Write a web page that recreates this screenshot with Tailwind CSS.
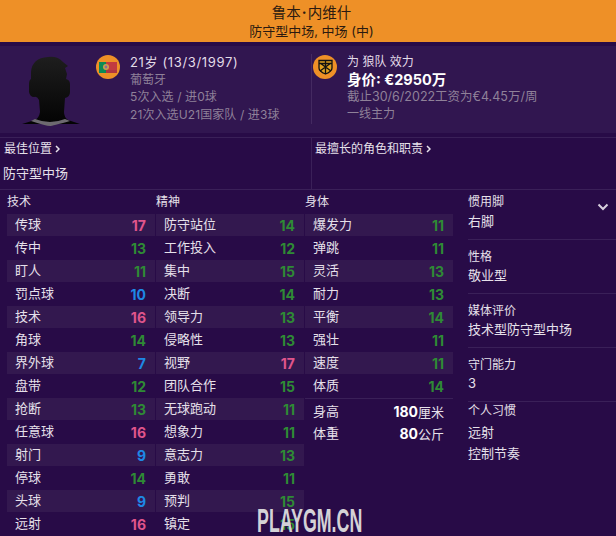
<!doctype html>
<html lang="zh-CN">
<head>
<meta charset="utf-8">
<script src="https://cdn.jsdelivr.net/npm/@tailwindcss/browser@4"></script>
</head>
<body class="m-0">
<div class="relative w-[616px] h-[536px] overflow-hidden bg-[#280b47] text-[#e6e0ea] text-[13px] font-['Inter','Noto_Sans_CJK_SC',sans-serif]">
  <header class="h-[42px] bg-[#ee9027] flex flex-col items-center justify-center text-[#2b1a10] pl-[7px]">
    <div class="text-[14.5px] leading-[19px]">鲁本<span class="mx-[1px] font-bold">·</span>内维什</div>
    <div class="text-[13px] leading-[18px]">防守型中场, 中场 (中)</div>
  </header>

  <section class="mt-[4px] h-[87px] bg-[#311650] flex">
    <div class="w-[311px] flex pl-[10px] pt-[2px]">
      <svg class="w-[80px] h-[85px] shrink-0" viewBox="0 0 80 85">
        <defs><linearGradient id="h" x1="0" y1="0" x2="0" y2="1"><stop offset="0" stop-color="#1e1e1e"/><stop offset="1" stop-color="#030303"/></linearGradient></defs>
        <path d="M12 76 L25 72 Q29 70 30 64 L29 52 Q27 48 24 49 Q20 49 19 44 L19 36 Q19 32 21 31 L21 24 Q22 10 38 9 Q48 8 53 14 L58 18 L55 20 L57 26 L56 31 Q60 32 60 36 L60 44 Q60 49 55 50 L54 64 Q54 69 58 72 L70 76 Z" fill="url(#h)"/>
        <path d="M21 73 L25 71 Q40 77 55 71 L60 73 Q42 78 40 78 Q36 78 21 73 Z" fill="#6d6a70"/>
      </svg>
      <div class="w-[24px] h-[24px] mt-[7px] ml-[6px] rounded-full bg-[#ee9027] flex items-center justify-center shrink-0">
        <svg class="w-[18px] h-[11px]" viewBox="0 0 18 11"><rect width="18" height="11" fill="#c23b40"/><rect width="7" height="11" fill="#0d8a55"/><rect y="8" x="7" width="11" height="3" fill="#b03540"/><circle cx="7" cy="5" r="3" fill="#c9a24a"/><circle cx="7" cy="5" r="1.4" fill="#8a6a9a"/></svg>
      </div>
      <div class="ml-[10px] pt-[5px] whitespace-nowrap">
        <div class="leading-[18px] text-[#e3dce8] tracking-[0.65px]">21岁 (13/3/1997)</div>
        <div class="leading-[17px] text-[12px] text-[#8f8199]">葡萄牙</div>
        <div class="leading-[18px] text-[12px] text-[#8f8199] tracking-[0.1px]">5次入选 / 进0球</div>
        <div class="leading-[17px] text-[12px] text-[#8f8199] tracking-[0.1px]">21次入选U21国家队 / 进3球</div>
      </div>
    </div>
    <div class="flex-1 flex relative pt-[9px] pl-[2px]">
      <div class="absolute left-0 top-[8px] h-[70px] w-px bg-[#442a61]"></div>
      <div class="w-[24px] h-[24px] rounded-full bg-[#ee9027] flex items-center justify-center shrink-0">
        <svg class="w-[15px] h-[16px]" viewBox="0 0 15 16" fill="none" stroke="#111" stroke-width="1.3"><path d="M1 1.5 H14 V9 Q14 12.5 7.5 15 Q1 12.5 1 9 Z" fill="#e0a020"/><path d="M7.5 1.5 V15 M2 4 L13 12 M13 4 L2 12 M1 4.5 H14"/></svg>
      </div>
      <div class="ml-[10px] -mt-[2px] whitespace-nowrap">
        <div class="leading-[18px] text-[12px] text-[#e3dce8]">为 狼队 效力</div>
        <div class="leading-[17px] text-[14.5px] font-bold text-white">身价: €2950万</div>
        <div class="leading-[18px] text-[12.5px] text-[#8f8199]">截止30/6/2022工资为€4.45万/周</div>
        <div class="leading-[16px] text-[12px] text-[#8f8199]">一线主力</div>
      </div>
    </div>
  </section>

  <section class="mt-[4px] h-[53px] border-t border-b border-[#3a2058] flex">
    <div class="w-[311px] pt-[2px]">
      <div class="pl-[4px] leading-[18px] text-[12px] flex items-center gap-[3px]">最佳位置<svg class="w-[5px] h-[8px]" viewBox="0 0 5 8" fill="none" stroke="#e6e0ea" stroke-width="1.5"><path d="M1 1 L4 4 L1 7"/></svg></div>
      <div class="pl-[3px] mt-[6px] leading-[18px] text-[13px]">防守型中场</div>
    </div>
    <div class="flex-1 border-l border-[#3a2058] pl-[3px] pt-[2px] leading-[18px] text-[12px] flex items-start gap-[3px]">最擅长的角色和职责<svg class="w-[5px] h-[8px] mt-[5px]" viewBox="0 0 5 8" fill="none" stroke="#e6e0ea" stroke-width="1.5"><path d="M1 1 L4 4 L1 7"/></svg></div>
  </section>

  <main class="flex pl-[7px]">
    <div class="w-[148px] mr-px">
      <div class="h-[24px] leading-[24px] text-[12px]">技术</div>
      <div class="h-[22px] mb-px bg-[#33184f] flex justify-between items-center pl-[8px] pr-[9px]"><span>传球</span><b class="text-[14px] text-[#e0558c]">17</b></div>
      <div class="h-[22px] mb-px flex justify-between items-center pl-[8px] pr-[9px]"><span>传中</span><b class="text-[14px] text-[#2f8a35]">13</b></div>
      <div class="h-[22px] mb-px bg-[#33184f] flex justify-between items-center pl-[8px] pr-[9px]"><span>盯人</span><b class="text-[14px] text-[#2f8a35]">11</b></div>
      <div class="h-[22px] mb-px flex justify-between items-center pl-[8px] pr-[9px]"><span>罚点球</span><b class="text-[14px] text-[#1e88e5]">10</b></div>
      <div class="h-[22px] mb-px bg-[#33184f] flex justify-between items-center pl-[8px] pr-[9px]"><span>技术</span><b class="text-[14px] text-[#e0558c]">16</b></div>
      <div class="h-[22px] mb-px flex justify-between items-center pl-[8px] pr-[9px]"><span>角球</span><b class="text-[14px] text-[#2f8a35]">14</b></div>
      <div class="h-[22px] mb-px bg-[#33184f] flex justify-between items-center pl-[8px] pr-[9px]"><span>界外球</span><b class="text-[14px] text-[#1e88e5]">7</b></div>
      <div class="h-[22px] mb-px flex justify-between items-center pl-[8px] pr-[9px]"><span>盘带</span><b class="text-[14px] text-[#2f8a35]">12</b></div>
      <div class="h-[22px] mb-px bg-[#33184f] flex justify-between items-center pl-[8px] pr-[9px]"><span>抢断</span><b class="text-[14px] text-[#2f8a35]">13</b></div>
      <div class="h-[22px] mb-px flex justify-between items-center pl-[8px] pr-[9px]"><span>任意球</span><b class="text-[14px] text-[#e0558c]">16</b></div>
      <div class="h-[22px] mb-px bg-[#33184f] flex justify-between items-center pl-[8px] pr-[9px]"><span>射门</span><b class="text-[14px] text-[#1e88e5]">9</b></div>
      <div class="h-[22px] mb-px flex justify-between items-center pl-[8px] pr-[9px]"><span>停球</span><b class="text-[14px] text-[#2f8a35]">14</b></div>
      <div class="h-[22px] mb-px bg-[#33184f] flex justify-between items-center pl-[8px] pr-[9px]"><span>头球</span><b class="text-[14px] text-[#1e88e5]">9</b></div>
      <div class="h-[22px] mb-px flex justify-between items-center pl-[8px] pr-[9px]"><span>远射</span><b class="text-[14px] text-[#e0558c]">16</b></div>
    </div>
    <div class="w-[148px] mr-px">
      <div class="h-[24px] leading-[24px] text-[12px]">精神</div>
      <div class="h-[22px] mb-px bg-[#33184f] flex justify-between items-center pl-[8px] pr-[9px]"><span>防守站位</span><b class="text-[14px] text-[#2f8a35]">14</b></div>
      <div class="h-[22px] mb-px flex justify-between items-center pl-[8px] pr-[9px]"><span>工作投入</span><b class="text-[14px] text-[#2f8a35]">12</b></div>
      <div class="h-[22px] mb-px bg-[#33184f] flex justify-between items-center pl-[8px] pr-[9px]"><span>集中</span><b class="text-[14px] text-[#2f8a35]">15</b></div>
      <div class="h-[22px] mb-px flex justify-between items-center pl-[8px] pr-[9px]"><span>决断</span><b class="text-[14px] text-[#2f8a35]">14</b></div>
      <div class="h-[22px] mb-px bg-[#33184f] flex justify-between items-center pl-[8px] pr-[9px]"><span>领导力</span><b class="text-[14px] text-[#2f8a35]">13</b></div>
      <div class="h-[22px] mb-px flex justify-between items-center pl-[8px] pr-[9px]"><span>侵略性</span><b class="text-[14px] text-[#2f8a35]">13</b></div>
      <div class="h-[22px] mb-px bg-[#33184f] flex justify-between items-center pl-[8px] pr-[9px]"><span>视野</span><b class="text-[14px] text-[#e0558c]">17</b></div>
      <div class="h-[22px] mb-px flex justify-between items-center pl-[8px] pr-[9px]"><span>团队合作</span><b class="text-[14px] text-[#2f8a35]">15</b></div>
      <div class="h-[22px] mb-px bg-[#33184f] flex justify-between items-center pl-[8px] pr-[9px]"><span>无球跑动</span><b class="text-[14px] text-[#2f8a35]">11</b></div>
      <div class="h-[22px] mb-px flex justify-between items-center pl-[8px] pr-[9px]"><span>想象力</span><b class="text-[14px] text-[#2f8a35]">11</b></div>
      <div class="h-[22px] mb-px bg-[#33184f] flex justify-between items-center pl-[8px] pr-[9px]"><span>意志力</span><b class="text-[14px] text-[#2f8a35]">13</b></div>
      <div class="h-[22px] mb-px flex justify-between items-center pl-[8px] pr-[9px]"><span>勇敢</span><b class="text-[14px] text-[#2f8a35]">11</b></div>
      <div class="h-[22px] mb-px bg-[#33184f] flex justify-between items-center pl-[8px] pr-[9px]"><span>预判</span><b class="text-[14px] text-[#2f8a35]">15</b></div>
      <div class="h-[22px] mb-px flex justify-between items-center pl-[8px] pr-[9px]"><span>镇定</span><b class="text-[14px] text-[#2f8a35]">15</b></div>
    </div>
    <div class="w-[148px]">
      <div class="h-[24px] leading-[24px] text-[12px]">身体</div>
      <div class="h-[22px] mb-px bg-[#33184f] flex justify-between items-center pl-[8px] pr-[9px]"><span>爆发力</span><b class="text-[14px] text-[#2f8a35]">11</b></div>
      <div class="h-[22px] mb-px flex justify-between items-center pl-[8px] pr-[9px]"><span>弹跳</span><b class="text-[14px] text-[#2f8a35]">11</b></div>
      <div class="h-[22px] mb-px bg-[#33184f] flex justify-between items-center pl-[8px] pr-[9px]"><span>灵活</span><b class="text-[14px] text-[#2f8a35]">13</b></div>
      <div class="h-[22px] mb-px flex justify-between items-center pl-[8px] pr-[9px]"><span>耐力</span><b class="text-[14px] text-[#2f8a35]">13</b></div>
      <div class="h-[22px] mb-px bg-[#33184f] flex justify-between items-center pl-[8px] pr-[9px]"><span>平衡</span><b class="text-[14px] text-[#2f8a35]">14</b></div>
      <div class="h-[22px] mb-px flex justify-between items-center pl-[8px] pr-[9px]"><span>强壮</span><b class="text-[14px] text-[#2f8a35]">11</b></div>
      <div class="h-[22px] mb-px bg-[#33184f] flex justify-between items-center pl-[8px] pr-[9px]"><span>速度</span><b class="text-[14px] text-[#2f8a35]">11</b></div>
      <div class="h-[22px] mb-px flex justify-between items-center pl-[8px] pr-[9px]"><span>体质</span><b class="text-[14px] text-[#2f8a35]">14</b></div>
      <div class="mt-[1px] pt-[2px] border-t border-[#3a2058]">
        <div class="h-[22px] flex justify-between items-center pl-[8px] pr-[9px]"><span>身高</span><span><b class="text-[14px] text-white">180</b>厘米</span></div>
        <div class="h-[22px] flex justify-between items-center pl-[8px] pr-[9px]"><span>体重</span><span><b class="text-[14px] text-white">80</b>公斤</span></div>
      </div>
    </div>
    <aside class="ml-[15px] flex-1">
      <div class="relative pt-[3px] h-[50px] border-b border-[#3a2058]">
        <div class="leading-[18px] text-[12px]">惯用脚</div>
        <div class="leading-[20px]">右脚</div>
        <svg class="absolute right-[7px] top-[13px] w-[12px] h-[8px]" viewBox="0 0 12 8" fill="none" stroke="#d8d0de" stroke-width="2"><path d="M1.5 1.5 L6 6 L10.5 1.5"/></svg>
      </div>
      <div class="pt-[8px] h-[54px] border-b border-[#3a2058]">
        <div class="leading-[18px] text-[12px]">性格</div>
        <div class="leading-[18px]">敬业型</div>
      </div>
      <div class="pt-[8px] h-[54px] border-b border-[#3a2058]">
        <div class="leading-[18px] text-[12px]">媒体评价</div>
        <div class="leading-[18px]">技术型防守型中场</div>
      </div>
      <div class="pt-[8px] h-[54px] border-b border-[#3a2058]">
        <div class="leading-[18px] text-[12px]">守门能力</div>
        <div class="leading-[18px]">3</div>
      </div>
      <div>
        <div class="leading-[18px] text-[12px]">个人习惯</div>
        <div class="leading-[21px] mt-[2px]">远射</div>
        <div class="leading-[21px]">控制节奏</div>
      </div>
    </aside>
  </main>

  <div class="absolute left-[257px] top-[505px] origin-left scale-x-[0.54] text-[33px] leading-[31px] font-bold text-[#d4d2d6] whitespace-nowrap font-['Liberation_Sans',sans-serif]">PLAYGM.CN</div>
</div>
</body>
</html>
